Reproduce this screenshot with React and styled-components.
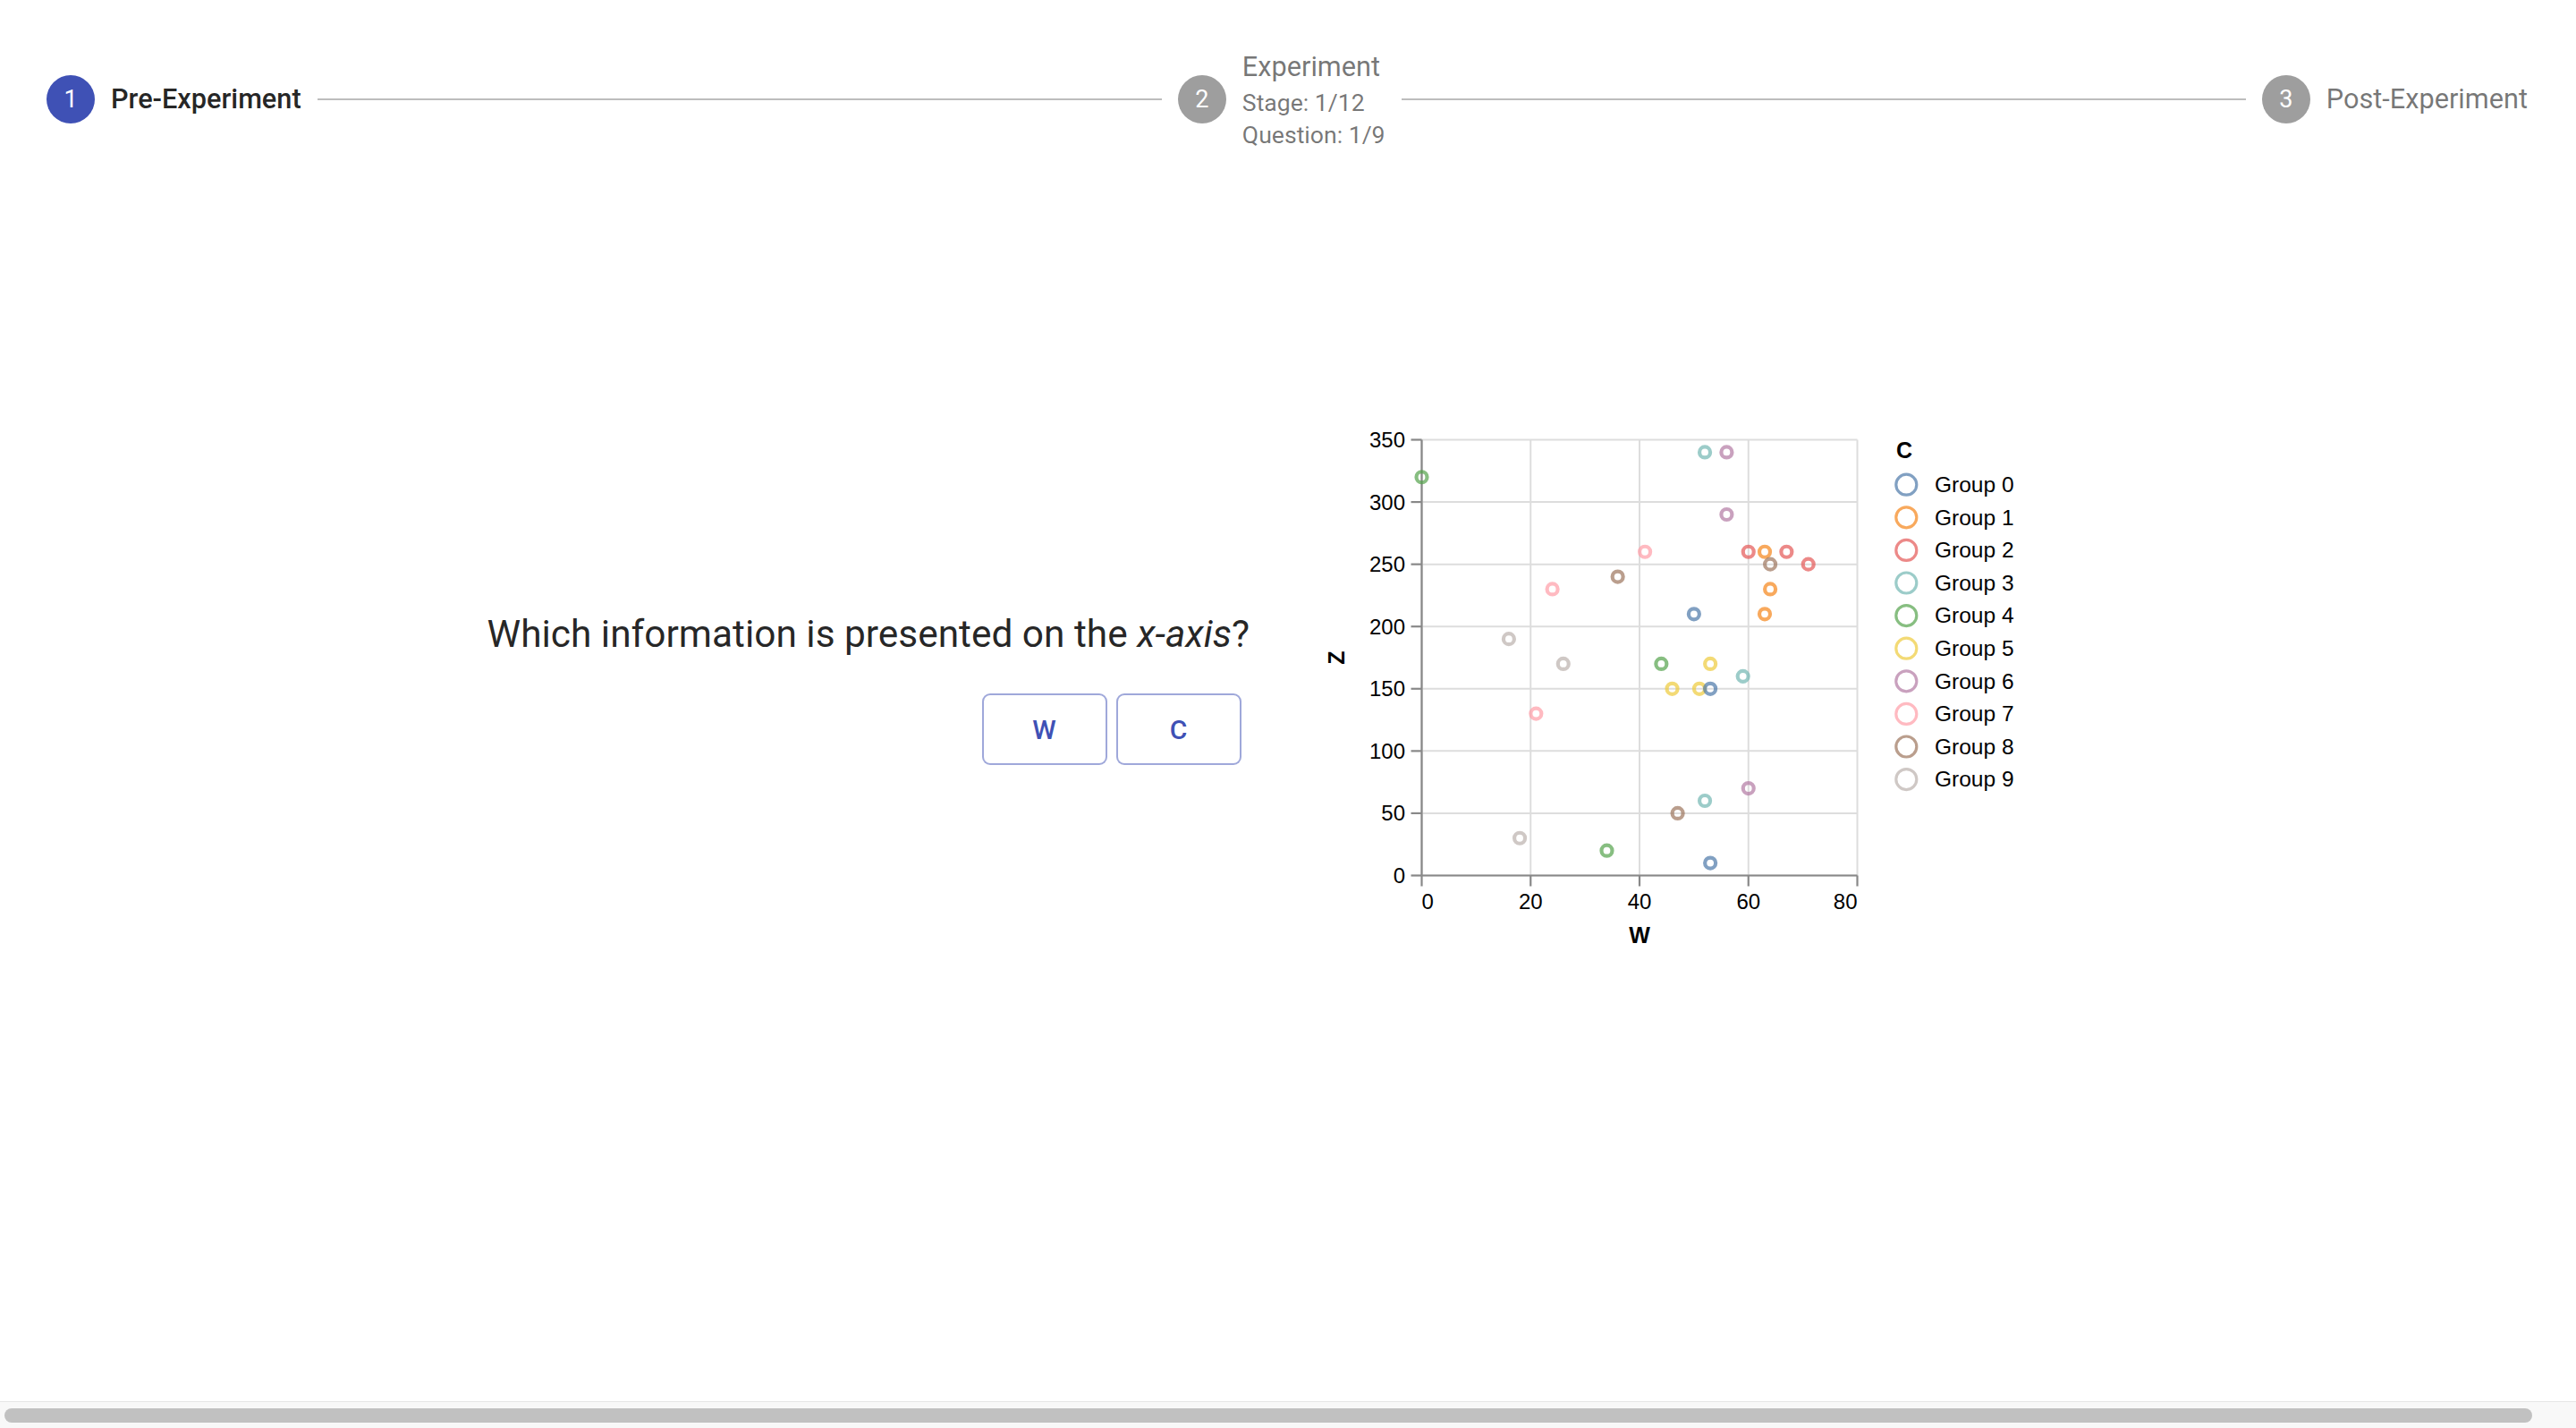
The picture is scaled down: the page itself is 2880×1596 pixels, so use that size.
import React from "react";
import styled, { createGlobalStyle } from "styled-components";

const GlobalStyle = createGlobalStyle`
  html, body {
    margin: 0;
    padding: 0;
    background: #fff;
  }
  body {
    font-family: Roboto, "Helvetica", "Arial", sans-serif;
    -webkit-font-smoothing: antialiased;
  }
`;

const Page = styled.div`
  min-height: 100vh;
  display: flex;
  flex-direction: column;
`;

// stepper across the top
const Stepper = styled.div`
  display: flex;
  align-items: center;
  padding: 52px 36px 52px 34px;
`;

const Step = styled.div`
  display: flex;
  align-items: center;
  flex: 0 0 auto;
  padding: 0 18px;
`;

const StepCircle = styled.div`
  width: 54px;
  height: 54px;
  border-radius: 50%;
  flex-shrink: 0;
  margin-right: 18px;
  display: flex;
  align-items: center;
  justify-content: center;
  background: ${(p) => (p.$active ? "#3f51b5" : "#9e9e9e")};
  color: #fff;
  font-size: 27px;
`;

const StepText = styled.div`
  display: flex;
  flex-direction: column;
`;

const StepLabel = styled.span`
  font-size: 30.7px;
  line-height: 45px;
  font-weight: ${(p) => (p.$active ? 500 : 400)};
  color: ${(p) => (p.$active ? "rgba(0, 0, 0, 0.87)" : "rgba(0, 0, 0, 0.54)")};
  white-space: nowrap;
`;

const StepCaption = styled.span`
  font-size: 26.6px;
  line-height: 36px;
  color: rgba(0, 0, 0, 0.54);
  white-space: nowrap;
`;

const Connector = styled.div`
  flex: 1 1 auto;
  border-top: 2px solid #bdbdbd;
`;

// question + chart
const Main = styled.main`
  flex: 1;
  display: grid;
  grid-template-columns: 1fr 1fr;
  align-items: center;
  align-content: start;
  padding-top: 249px;
`;

const QuestionColumn = styled.div`
  display: flex;
  flex-direction: column;
  align-items: flex-end;
  padding-right: 43px;
  margin-top: -6px;
`;

const Question = styled.p`
  margin: 0 0 36px;
  font-size: 42.4px;
  line-height: 60px;
  color: rgba(0, 0, 0, 0.87);
  white-space: nowrap;
`;

const ButtonRow = styled.div`
  display: flex;
  gap: 10px;
  margin-right: 9px;
`;

const AnswerButton = styled.button`
  width: 140px;
  height: 80px;
  box-sizing: border-box;
  border: 2px solid rgba(63, 81, 181, 0.5);
  border-radius: 9px;
  background: #fff;
  color: #3f51b5;
  font-family: Roboto, "Helvetica", "Arial", sans-serif;
  font-size: 30px;
  font-weight: 500;
  letter-spacing: 0.9px;
  text-transform: uppercase;
  cursor: pointer;
`;

const ChartColumn = styled.div`
  padding-left: 30px;
`;

const ChartSvg = styled.svg`
  display: block;
  font-family: "Liberation Sans", Arial, sans-serif;
`;

const GridLine = styled.line`
  stroke: #ddd;
  stroke-width: 2;
`;

const AxisLine = styled.line`
  stroke: #888;
  stroke-width: 2.2;
`;

const TickLabel = styled.text`
  font-size: 24px;
  fill: #000;
`;

const LegendLabel = styled.text`
  font-size: 24.5px;
  fill: #000;
`;

const AxisTitle = styled.text`
  font-size: 25px;
  font-weight: bold;
  fill: #000;
`;

const Ring = styled.circle`
  fill: none;
  stroke: ${(p) => p.$color};
  opacity: 0.7;
`;

const ScrollTrack = styled.div`
  height: 30px;
  box-sizing: border-box;
  background: #f8f8f8;
  border-top: 1px solid #e6e6e6;
  padding: 7px 49px 6px 5px;
`;

const ScrollThumb = styled.div`
  height: 16px;
  border-radius: 8px;
  background: #c1c1c1;
`;

const COLORS = [
  "#4c78a8",
  "#f58518",
  "#e45756",
  "#72b7b2",
  "#54a24b",
  "#eeca3b",
  "#b279a2",
  "#ff9da6",
  "#9d755d",
  "#bab0ac",
];

// [W, Z, group]
const POINTS = [
  [52, 340, 3], [56, 340, 6], [0, 320, 4], [56, 290, 6],
  [41, 260, 7], [60, 260, 2], [63, 260, 1], [67, 260, 2],
  [64, 250, 8], [71, 250, 2], [36, 240, 8], [24, 230, 7],
  [64, 230, 1], [50, 210, 0], [63, 210, 1], [16, 190, 9],
  [26, 170, 9], [44, 170, 4], [53, 170, 5], [59, 160, 3],
  [46, 150, 5], [51, 150, 5], [53, 150, 0], [21, 130, 7],
  [60, 70, 6], [52, 60, 3], [47, 50, 8], [18, 30, 9],
  [34, 20, 4], [53, 10, 0],
];

const PL = 119.5;
const PT = 21.5;
const PS = 487;
const xs = (v) => PL + (v / 80) * PS;
const ys = (v) => PT + ((350 - v) / 350) * PS;

const X_TICKS = [0, 20, 40, 60, 80];
const Y_TICKS = [0, 50, 100, 150, 200, 250, 300, 350];

function ScatterChart() {
  const bottom = PT + PS;
  return (
    <ChartSvg width="800" height="600" viewBox="0 0 800 600">
      {X_TICKS.map((t) => (
        <GridLine key={"gx" + t} x1={xs(t)} x2={xs(t)} y1={PT} y2={bottom} />
      ))}
      {Y_TICKS.map((t) => (
        <GridLine key={"gy" + t} x1={PL} x2={PL + PS} y1={ys(t)} y2={ys(t)} />
      ))}

      <AxisLine x1={PL} x2={PL} y1={PT} y2={bottom} />
      <AxisLine x1={PL} x2={PL + PS} y1={bottom} y2={bottom} />

      {Y_TICKS.map((t) => (
        <g key={"ty" + t}>
          <AxisLine x1={PL - 12} x2={PL} y1={ys(t)} y2={ys(t)} />
          <TickLabel x={PL - 18.5} y={ys(t) + 8.5} textAnchor="end">
            {t}
          </TickLabel>
        </g>
      ))}
      {X_TICKS.map((t, i) => (
        <g key={"tx" + t}>
          <AxisLine x1={xs(t)} x2={xs(t)} y1={bottom} y2={bottom + 12} />
          <TickLabel
            x={xs(t)}
            y={bottom + 37}
            textAnchor={i === 0 ? "start" : i === X_TICKS.length - 1 ? "end" : "middle"}
          >
            {t}
          </TickLabel>
        </g>
      ))}

      <AxisTitle x={PL + PS / 2} y={584} textAnchor="middle">
        W
      </AxisTitle>
      <AxisTitle x={33} y={PT + PS / 2} textAnchor="middle" transform={`rotate(-90 33 ${PT + PS / 2})`}>
        Z
      </AxisTitle>

      {POINTS.map(([w, z, g], i) => (
        <Ring key={i} cx={xs(w)} cy={ys(z)} r={6} strokeWidth={4.2} $color={COLORS[g]} />
      ))}

      <AxisTitle x={650} y={42.3}>
        C
      </AxisTitle>
      {COLORS.map((c, i) => {
        const cy = 71.7 + i * 36.6;
        return (
          <g key={c}>
            <Ring cx={661.3} cy={cy} r={11.5} strokeWidth={3.2} $color={c} />
            <LegendLabel x={693} y={cy + 8.2}>
              Group {i}
            </LegendLabel>
          </g>
        );
      })}
    </ChartSvg>
  );
}

export default function App() {
  return (
    <Page>
      <GlobalStyle />
      <Stepper>
        <Step>
          <StepCircle $active>1</StepCircle>
          <StepText>
            <StepLabel $active>Pre-Experiment</StepLabel>
          </StepText>
        </Step>
        <Connector />
        <Step>
          <StepCircle>2</StepCircle>
          <StepText>
            <StepLabel>Experiment</StepLabel>
            <StepCaption>Stage: 1/12</StepCaption>
            <StepCaption>Question: 1/9</StepCaption>
          </StepText>
        </Step>
        <Connector />
        <Step>
          <StepCircle>3</StepCircle>
          <StepText>
            <StepLabel>Post-Experiment</StepLabel>
          </StepText>
        </Step>
      </Stepper>

      <Main>
        <QuestionColumn>
          <Question>
            Which information is presented on the <i>x-axis</i>?
          </Question>
          <ButtonRow>
            <AnswerButton>W</AnswerButton>
            <AnswerButton>C</AnswerButton>
          </ButtonRow>
        </QuestionColumn>
        <ChartColumn>
          <ScatterChart />
        </ChartColumn>
      </Main>

      <ScrollTrack>
        <ScrollThumb />
      </ScrollTrack>
    </Page>
  );
}
